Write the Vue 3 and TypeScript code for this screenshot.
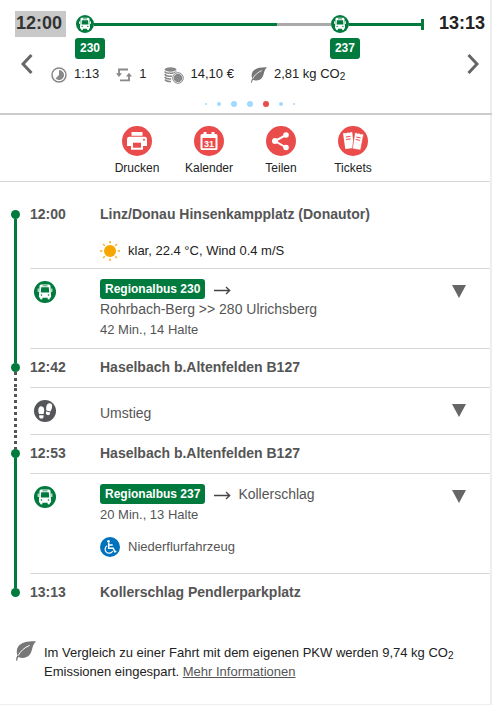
<script setup lang="ts">
interface Action {
  id: string
  label: string
}

const actions: Action[] = [
  { id: 'print', label: 'Drucken' },
  { id: 'calendar', label: 'Kalender' },
  { id: 'share', label: 'Teilen' },
  { id: 'tickets', label: 'Tickets' },
]

const pages: string[] = ['tiny', 'small', 'full', 'full', 'full active', 'small', 'tiny']
</script>

<template>
  <svg class="sprite" aria-hidden="true">
    <symbol id="bus" viewBox="0 0 22 22">
      <circle cx="11" cy="11" r="11" fill="#007a3d" />
      <path fill="#fff" d="M7 3.500h8q1.400 0 1.500 1.500l.6 10.500q0 1.200-1 1.200h-.3v1q0 .8-1.100.8t-1.100-.8v-1H8.400v1q0 .8-1.100.8t-1.100-.8v-1h-.3q-1 0-1-1.200L5.500 5Q5.600 3.500 7 3.500z" />
      <path fill="#fff" d="M3.700 7.500h1v3.400h-1zM17.300 7.500h1v3.400h-1z" />
      <path fill="#007a3d" d="M8.500 4.400h5v.8h-5zM7.200 6.300h7.600l.4 5.200H6.800z" />
      <circle cx="7.500" cy="14" r=".8" fill="#007a3d" />
      <circle cx="14.500" cy="14" r=".8" fill="#007a3d" />
    </symbol>
    <symbol id="leaf" viewBox="0 0 20 20">
      <path fill="#777" d="M20 .4C13 .2 5.500 1 2.200 5.600c-1.900 2.700-1.700 6.200-.7 8.700C.5 16 .1 17.700 0 19.600l1.100.2c.2-1.600.6-2.800 1.300-3.900 3.100 1.800 8.500 1.300 11.200-2.100C16.600 10 15.800 4 20 .4z" />
      <path fill="none" stroke="#fff" stroke-width="1" d="M2.200 14.600C4.600 10 8.500 6.500 13.600 4.400" />
    </symbol>
    <symbol id="arrow" viewBox="0 0 17 9">
      <path fill="none" stroke="#444" stroke-width="1.300" d="M0 4.500h15.500M12 1l3.700 3.500L12 8" />
    </symbol>
  </svg>

  <main class="trip">
    <header class="summary">
      <div class="overview">
        <time class="clock start">12:00</time>
        <div class="track">
          <svg class="node first"><use href="#bus" /></svg>
          <span class="segment"></span>
          <span class="segment wait"></span>
          <svg class="node"><use href="#bus" /></svg>
          <span class="segment last"></span>
          <span class="line-tag tag-one">230</span>
          <span class="line-tag tag-two">237</span>
        </div>
        <time class="clock">13:13</time>
      </div>
      <div class="facts-row">
        <button class="turn" type="button" aria-label="Zurück">
          <svg viewBox="0 0 12 20"><path d="M10.500 1 2 10l8.500 9" /></svg>
        </button>
        <ul class="facts">
          <li>
            <svg class="fact-icon" viewBox="0 0 16 16">
              <circle cx="8" cy="8" r="7" fill="none" stroke="#888" stroke-width="1.500" />
              <path fill="#888" d="M8 3a5 5 0 1 1-3.500 8.600L8 8z" />
            </svg>
            <span>1:13</span>
          </li>
          <li>
            <svg class="fact-icon" viewBox="0 0 16 16">
              <path fill="none" stroke="#888" stroke-width="1.800" d="M3 8V2.500h9M13 7.500v5.900H4" />
              <path fill="#888" d="M0 6.200h6L3 10zM10 9.600h6L13 5.800z" />
            </svg>
            <span>1</span>
          </li>
          <li>
            <svg class="fact-icon coins" viewBox="0 0 20 17">
              <ellipse cx="6.500" cy="2.500" rx="6" ry="2.200" fill="#888" />
              <path fill="none" stroke="#888" stroke-width="1.500" d="M.7 4.500c1 2.400 10 2.400 11.800 0M.7 7.200c1 2 5 2.300 8 1.800M.7 9.900c1 1.900 4 2.200 6.500 2M1 12.500c1 1.700 3.500 2.200 6 2" />
              <circle cx="14" cy="11" r="6.200" fill="#fff" />
              <circle cx="14" cy="11" r="5.300" fill="none" stroke="#888" />
              <circle cx="14" cy="11" r="4.300" fill="#888" />
            </svg>
            <span>14,10 €</span>
          </li>
          <li>
            <svg class="fact-icon"><use href="#leaf" /></svg>
            <span>2,81 kg CO<sub>2</sub></span>
          </li>
        </ul>
        <button class="turn" type="button" aria-label="Weiter">
          <svg viewBox="0 0 12 20"><path d="m1.500 1 8.500 9-8.500 9" /></svg>
        </button>
      </div>
      <div class="pager">
        <i v-for="(page, i) in pages" :key="i" class="page" :class="page"></i>
      </div>
    </header>

    <nav class="actions">
      <button v-for="action in actions" :key="action.id" class="action" type="button">
        <svg class="action-icon" viewBox="0 0 30 30">
          <circle cx="15" cy="15" r="15" fill="#ea4b4b" />
          <g v-if="action.id === 'print'">
            <path fill="#fff" d="M9.500 6h11v3.700h-11zM7.500 10.700h15q2.500 0 2.500 2.500V20h-4v3.700H9V20H5v-6.800q0-2.500 2.500-2.500z" />
            <path fill="#ea4b4b" d="M11 16.700h8v5h-8z" />
            <circle cx="22" cy="13.700" r="1" fill="#ea4b4b" />
          </g>
          <g v-else-if="action.id === 'calendar'">
            <path fill="#fff" d="M8 8h1.500V6h3v2h5V6h3v2H22q1.500 0 1.500 1.500v13q0 1.500-1.500 1.500H8q-1.500 0-1.500-1.500v-13Q6.500 8 8 8z" />
            <path fill="#ea4b4b" d="M8.500 12h13v10.200h-13z" />
            <text x="15" y="20.600" text-anchor="middle" class="day">31</text>
          </g>
          <g v-else-if="action.id === 'share'" fill="#fff">
            <path fill="none" stroke="#fff" stroke-width="2" d="m20 9-11 6 11 6.500" />
            <circle cx="20" cy="9" r="2.800" />
            <circle cx="9" cy="15" r="3" />
            <circle cx="20" cy="21.500" r="2.800" />
          </g>
          <g v-else fill="#fff">
            <path d="m5 7.300 2.200-.3q.8 1 1.700-.2l1.700-.2q1 .8 1.700-.3l1.900-.2 1.800 16-8.700 1z" />
            <path d="m16.800 6.500 1.900.3q1 1 1.800.3l1.500.3q.6 1.200 1.800.4l1.900.4-3.100 16-8.200-1.500z" stroke="#ea4b4b" stroke-width=".7" />
            <path stroke="#ea4b4b" d="m7.800 11 4.600-.6M8.100 13.500l4.600-.6M18.200 11l4.400.9M17.700 13.500l4.400.9" />
          </g>
        </svg>
        <span>{{ action.label }}</span>
      </button>
    </nav>

    <section class="legs">
      <div class="row stop">
        <div class="rail"><span class="bar none"></span><span class="dot"></span><span class="bar"></span></div>
        <div class="cell">
          <time class="when">12:00</time>
          <div class="body">
            <strong>Linz/Donau Hinsenkampplatz (Donautor)</strong>
            <p class="note dark weather">
              <svg class="note-icon" viewBox="0 0 20 20">
                <path stroke="#f9b233" stroke-width="1.500" d="M10 0v2.500M10 17.500V20M0 10h2.500M17.500 10H20M3 3l1.800 1.800M15.200 15.200 17 17M3 17l1.800-1.800M15.200 4.800 17 3" />
                <circle cx="10" cy="10" r="6" fill="#f7a600" />
              </svg>
              klar, 22.4 °C, Wind 0.4 m/S
            </p>
          </div>
        </div>
      </div>

      <div class="row ride">
        <div class="rail"><span class="bar"></span></div>
        <div class="cell">
          <svg class="mode"><use href="#bus" /></svg>
          <div class="body">
            <div class="heading"><span class="badge">Regionalbus 230</span><svg class="arrow"><use href="#arrow" /></svg></div>
            <div class="direction">Rohrbach-Berg &gt;&gt; 280 Ulrichsberg</div>
            <div class="info">42 Min., 14 Halte</div>
          </div>
          <button class="expand" type="button" aria-label="Halte anzeigen"></button>
        </div>
      </div>

      <div class="row stop">
        <div class="rail"><span class="bar"></span><span class="dot"></span><span class="bar walk"></span></div>
        <div class="cell">
          <time class="when">12:42</time>
          <div class="body"><strong>Haselbach b.Altenfelden B127</strong></div>
        </div>
      </div>

      <div class="row change">
        <div class="rail"><span class="bar walk"></span></div>
        <div class="cell">
          <svg class="mode" viewBox="0 0 22 22">
            <circle cx="11" cy="11" r="11" fill="#55565a" />
            <g fill="#fff">
              <path d="M7.200 6.300c2.300 0 3.100 2.200 3 4.300 0 1.300-.4 2.400-.6 3.500H5.100c-.3-1.200-.9-2.300-.8-3.900.1-2.200 1-3.900 2.900-3.900zM5.200 15.200h4.300c.4 2-.3 3.400-2.100 3.400s-2.500-1.400-2.200-3.400z" />
              <path d="M15.900 3.300c2.300.4 2.500 2.400 2.100 4.400-.3 1.500-1 2.500-1.500 3.700l-4.200-.8c0-1.300-.3-2.400 0-3.900.4-2.200 1.600-3.700 3.600-3.400zM12.100 11.600l4.100.8c-.1 2-1.100 3-2.700 2.700s-2-1.800-1.400-3.500z" />
            </g>
          </svg>
          <div class="body direction">Umstieg</div>
          <button class="expand" type="button" aria-label="Umstieg anzeigen"></button>
        </div>
      </div>

      <div class="row stop">
        <div class="rail"><span class="bar walk"></span><span class="dot"></span><span class="bar"></span></div>
        <div class="cell">
          <time class="when">12:53</time>
          <div class="body"><strong>Haselbach b.Altenfelden B127</strong></div>
        </div>
      </div>

      <div class="row ride">
        <div class="rail"><span class="bar"></span></div>
        <div class="cell">
          <svg class="mode"><use href="#bus" /></svg>
          <div class="body">
            <div class="heading">
              <span class="badge">Regionalbus 237</span><svg class="arrow"><use href="#arrow" /></svg><span class="direction">Kollerschlag</span>
            </div>
            <div class="info">20 Min., 13 Halte</div>
            <p class="note">
              <svg class="note-icon" viewBox="0 0 20 20">
                <circle cx="10" cy="10" r="10" fill="#0071bc" />
                <circle cx="8.500" cy="4.200" r="1.300" fill="#fff" />
                <path fill="none" stroke="#fff" stroke-width="1.500" d="M8.700 5.500v5.800h4.600l1.500 3.600 1.500-.6M8.700 8h4" />
                <path fill="none" stroke="#fff" stroke-width="1.200" d="M7.200 8.700a4 4 0 1 0 5.500 5.300" />
              </svg>
              Niederflurfahrzeug
            </p>
          </div>
          <button class="expand" type="button" aria-label="Halte anzeigen"></button>
        </div>
      </div>

      <div class="row stop final">
        <div class="rail"><span class="bar"></span><span class="dot"></span></div>
        <div class="cell">
          <time class="when">13:13</time>
          <div class="body"><strong>Kollerschlag Pendlerparkplatz</strong></div>
        </div>
      </div>
    </section>

    <footer class="saving">
      <svg class="saving-icon"><use href="#leaf" /></svg>
      <p>
        Im Vergleich zu einer Fahrt mit dem eigenen PKW werden 9,74 kg CO<sub>2</sub>
        Emissionen eingespart. <a href="#info">Mehr Informationen</a>
      </p>
    </footer>
  </main>
</template>

<style>
body {
  background: #fff;
}
</style>

<style scoped>
.trip {
  font-family: "Liberation Sans", Arial, sans-serif;
  font-size: 13px;
  line-height: 20px;
  color: #222;
  border-right: 2px solid #eee;
  border-bottom: 1px solid #eee;
}
.sprite {
  position: absolute;
  width: 0;
  height: 0;
}
svg {
  display: block;
  flex: none;
}
button {
  border: 0;
  padding: 0;
  background: none;
  font: inherit;
  color: inherit;
  cursor: pointer;
}
p {
  margin: 0;
}
sub {
  font-size: 10px;
  line-height: 0;
  vertical-align: -2px;
}
.summary {
  margin-right: -2px;
  padding-top: 11px;
  border-bottom: 2px solid #ccc;
}
.overview {
  display: flex;
  align-items: flex-start;
  padding: 0 7px 0 15px;
}
.clock {
  font-size: 18px;
  font-weight: bold;
  line-height: 24px;
}
.start {
  width: 50px;
  height: 26px;
  padding-left: 1px;
  background: #c8c8c8;
  color: #333;
}
.track {
  flex: 1;
  display: grid;
  grid-template-columns: 18px 183fr 54fr 18px 75fr;
  grid-template-rows: 18px 21px;
  row-gap: 5px;
  align-items: center;
  margin: 4px 15px 0 10px;
}
.node {
  width: 18px;
  height: 18px;
}
.segment {
  height: 3px;
  background: #007a3d;
}
.wait {
  background: #aaa;
}
.last {
  display: flex;
  align-items: center;
  justify-content: flex-end;
}
.last::after {
  content: "";
  width: 3px;
  height: 11px;
  background: #007a3d;
}
.line-tag {
  grid-row: 2;
  width: 30px;
  margin-left: -1px;
  border-radius: 3px;
  background: #007a3d;
  color: #fff;
  font-size: 12px;
  font-weight: bold;
  line-height: 21px;
  text-align: center;
}
.tag-one {
  grid-column: 1;
}
.tag-two {
  grid-column: 4;
}
.facts-row {
  display: flex;
  align-items: flex-start;
  justify-content: space-between;
  height: 42px;
  padding: 0 13px 0 21px;
}
.turn {
  margin-top: -5px;
}
.turn svg {
  width: 12px;
  height: 20px;
}
.turn path {
  fill: none;
  stroke: #666;
  stroke-width: 3;
}
.facts {
  flex: 1;
  display: flex;
  gap: 17px;
  margin: 0 0 0 18px;
  padding: 5px 0 0;
  list-style: none;
}
.facts li {
  display: flex;
  gap: 7px;
}
.fact-icon {
  width: 16px;
  height: 16px;
  margin-top: 3px;
}
.coins {
  width: 20px;
  height: 17px;
}
.pager {
  display: flex;
  align-items: center;
  justify-content: center;
  gap: 10px;
  padding: 0 0 6px 7px;
}
.page {
  border-radius: 50%;
  background: #9edcff;
}
.tiny {
  width: 2px;
  height: 2px;
}
.small {
  width: 4px;
  height: 4px;
}
.full {
  width: 6px;
  height: 6px;
}
.active {
  background: #ea4b4b;
}
.actions {
  display: flex;
  justify-content: center;
  padding: 11px 0 3px;
  border-bottom: 1px solid #d8d8d8;
}
.action {
  display: flex;
  flex-direction: column;
  align-items: center;
  gap: 2px;
  width: 72px;
  font-size: 12px;
}
.action-icon {
  width: 30px;
  height: 30px;
}
.day {
  fill: #fff;
  font-size: 9px;
  font-weight: bold;
}
.legs {
  color: #555;
}
.row {
  display: flex;
}
.rail {
  display: flex;
  flex-direction: column;
  align-items: center;
  width: 31px;
  margin-right: -1px;
}
.bar {
  flex: 1;
  width: 3px;
  background: #007a3d;
}
.stop .bar:first-child {
  flex: none;
  height: 14px;
}
.stop:first-child .bar:first-child {
  height: 28px;
}
.bar.none {
  background: none;
}
.bar.walk {
  background: repeating-linear-gradient(#555 0 3px, transparent 3px 6px);
}
.dot {
  flex: none;
  width: 9px;
  height: 9px;
  border-radius: 50%;
  background: #007a3d;
}
.cell {
  flex: 1;
  display: flex;
  align-items: flex-start;
  border-bottom: 1px solid #d8d8d8;
}
.stop .cell {
  padding: 8px 0 10px;
}
.stop:first-child .cell {
  padding: 22px 0 7px;
}
.final .cell {
  border: 0;
}
.when {
  width: 70px;
  font-size: 14px;
  font-weight: bold;
}
.body {
  flex: 1;
}
strong {
  display: block;
  font-size: 14px;
}
.ride .cell {
  padding: 10px 0 8px;
}
.mode {
  width: 22px;
  height: 22px;
  margin: 2px 44px 0 4px;
}
.heading {
  display: flex;
  align-items: center;
}
.info {
  padding-top: 1px;
}
.badge {
  padding: 0 5px;
  border-radius: 3px;
  background: #007a3d;
  color: #fff;
  font-size: 12px;
  font-weight: bold;
}
.arrow {
  width: 17px;
  height: 9px;
  margin: 3px 7px 0 9px;
}
.direction {
  font-size: 14px;
}
.expand {
  width: 14px;
  height: 13px;
  margin: 6px 24px 0 0;
  background: #666;
  clip-path: polygon(0 0, 100% 0, 50% 100%);
}
.change .cell {
  padding: 10px 0 12px;
}
.change .body {
  padding-top: 7px;
  line-height: 17px;
}
.note {
  display: flex;
  align-items: center;
  gap: 8px;
  padding: 12px 0 8px;
}
.note-icon {
  width: 20px;
  height: 20px;
}
.weather {
  padding: 17px 0 0;
}
.dark {
  color: #222;
}
.saving {
  display: flex;
  gap: 8px;
  padding: 29px 30px 23px 16px;
  line-height: 19px;
}
.saving p {
  padding-top: 2px;
}
.saving-icon {
  width: 20px;
  height: 20px;
}
.saving a {
  color: #555;
}
</style>
